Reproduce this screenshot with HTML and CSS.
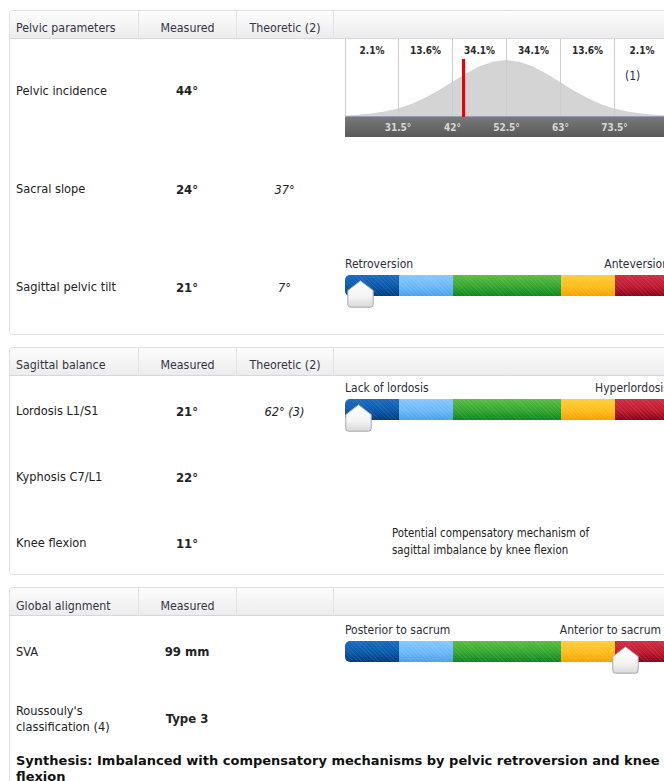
FILE: index.html
```html
<!DOCTYPE html>
<html lang="en">
<head>
<meta charset="utf-8">
<title>Sagittal analysis</title>
<link rel="stylesheet" href="styles.css">
</head>
<body>
<main class="report">

  <section class="card card-pelvic">
    <div class="head head-first">Pelvic parameters</div>
    <div class="head">Measured</div>
    <div class="head">Theoretic (2)</div>
    <div class="head"></div>

    <div class="label">Pelvic incidence</div>
    <div class="value">44°</div>
    <div class="theo"></div>
    <div class="viz viz-top">
      <svg class="distribution" width="330" height="98" viewBox="0 0 330 98">
        <defs>
          <linearGradient id="axisFill" x1="0" y1="0" x2="0" y2="1">
            <stop offset="0" stop-color="#7a7a7a"/>
            <stop offset="1" stop-color="#595959"/>
          </linearGradient>
        </defs>
        <path class="bell" d="M-1,77 L-1,76.4 L12.5,75.7 L26,74.5 L39.5,72.5 L53,69.4 L66.5,64.9 L80,58.8 L93.5,51.4 L107,43 L120.5,34.7 L134,27.6 L147.5,22.7 L161,21 L174.5,22.7 L188,27.6 L201.5,34.7 L215,43 L228.5,51.4 L242,58.8 L255.5,64.9 L269,69.4 L282.5,72.5 L296,74.5 L309.5,75.7 L323,76.4 L330,76.7 L330,77 Z"/>
        <g class="grid-lines">
          <line x1="0.5" y1="0" x2="0.5" y2="77"/>
          <line x1="53.5" y1="0" x2="53.5" y2="77"/>
          <line x1="107.5" y1="0" x2="107.5" y2="77"/>
          <line x1="161.5" y1="0" x2="161.5" y2="77"/>
          <line x1="215.5" y1="0" x2="215.5" y2="77"/>
          <line x1="269.5" y1="0" x2="269.5" y2="77"/>
        </g>
        <g class="pct">
          <text x="27" y="14.5">2.1%</text>
          <text x="80.5" y="14.5">13.6%</text>
          <text x="134.5" y="14.5">34.1%</text>
          <text x="188.5" y="14.5">34.1%</text>
          <text x="242.5" y="14.5">13.6%</text>
          <text x="297" y="14.5">2.1%</text>
        </g>
        <text class="ref" x="280" y="40.5">(1)</text>
        <rect x="0" y="77" width="330" height="21" fill="url(#axisFill)"/>
        <line class="axis-edge" x1="0" y1="77.5" x2="330" y2="77.5"/>
        <g class="ticks">
          <text x="53" y="91.5">31.5°</text>
          <text x="107.5" y="91.5">42°</text>
          <text x="161.5" y="91.5">52.5°</text>
          <text x="215.5" y="91.5">63°</text>
          <text x="269.5" y="91.5">73.5°</text>
        </g>
        <rect class="marker" x="117" y="20" width="3" height="58"/>
      </svg>
    </div>

    <div class="label">Sacral slope</div>
    <div class="value">24°</div>
    <div class="theo">37°</div>
    <div class="viz"></div>

    <div class="label">Sagittal pelvic tilt</div>
    <div class="value">21°</div>
    <div class="theo">7°</div>
    <div class="viz">
      <div class="slider">
        <div class="slider-labels"><span>Retroversion</span><span>Anteversion</span></div>
        <div class="bar">
          <span class="seg seg-navy"></span><span class="seg seg-sky"></span><span class="seg seg-green"></span><span class="seg seg-amber"></span><span class="seg seg-red"></span>
          <svg class="thumb" style="left: 2px" width="27" height="28" viewBox="0 0 27 28">
            <use href="#thumbShape"/>
          </svg>
        </div>
      </div>
    </div>
  </section>

  <section class="card card-balance">
    <div class="head head-first">Sagittal balance</div>
    <div class="head">Measured</div>
    <div class="head">Theoretic (2)</div>
    <div class="head"></div>

    <div class="label">Lordosis L1/S1</div>
    <div class="value">21°</div>
    <div class="theo">62° (3)</div>
    <div class="viz">
      <div class="slider">
        <div class="slider-labels"><span>Lack of lordosis</span><span>Hyperlordosis</span></div>
        <div class="bar">
          <span class="seg seg-navy"></span><span class="seg seg-sky"></span><span class="seg seg-green"></span><span class="seg seg-amber"></span><span class="seg seg-red"></span>
          <svg class="thumb" style="left: 0px" width="27" height="28" viewBox="0 0 27 28">
            <use href="#thumbShape"/>
          </svg>
        </div>
      </div>
    </div>

    <div class="label">Kyphosis C7/L1</div>
    <div class="value">22°</div>
    <div class="theo"></div>
    <div class="viz"></div>

    <div class="label">Knee flexion</div>
    <div class="value">11°</div>
    <div class="theo"></div>
    <div class="viz">
      <p class="note">Potential compensatory mechanism of<br>sagittal imbalance by knee flexion</p>
    </div>
  </section>

  <section class="card card-global">
    <div class="head head-first">Global alignment</div>
    <div class="head">Measured</div>
    <div class="head"></div>
    <div class="head"></div>

    <div class="label">SVA</div>
    <div class="value">99 mm</div>
    <div class="theo"></div>
    <div class="viz">
      <div class="slider">
        <div class="slider-labels"><span>Posterior to sacrum</span><span class="end-label">Anterior to sacrum</span></div>
        <div class="bar">
          <span class="seg seg-navy"></span><span class="seg seg-sky"></span><span class="seg seg-green"></span><span class="seg seg-amber"></span><span class="seg seg-red"></span>
          <svg class="thumb" style="left: 267px" width="27" height="28" viewBox="0 0 27 28">
            <use href="#thumbShape"/>
          </svg>
        </div>
      </div>
    </div>

    <div class="label">Roussouly's classification (4)</div>
    <div class="value">Type 3</div>
    <div class="theo"></div>
    <div class="viz"></div>

    <p class="synthesis">Synthesis: Imbalanced with compensatory mechanisms by pelvic retroversion and knee flexion</p>
  </section>

</main>

<svg class="defs" width="0" height="0" aria-hidden="true">
  <defs>
    <linearGradient id="thumbFill" x1="0" y1="0" x2="0" y2="1">
      <stop offset="0" stop-color="#ffffff"/>
      <stop offset="0.6" stop-color="#f4f4f4"/>
      <stop offset="1" stop-color="#d9d9d9"/>
    </linearGradient>
    <path id="thumbShape" d="M13.5,0.8 L26.2,10.5 L26.2,24.5 Q26.2,27.2 23.5,27.2 L3.5,27.2 Q0.8,27.2 0.8,24.5 L0.8,10.5 Z" fill="url(#thumbFill)" stroke="#a8a8a8" stroke-width="1"/>
  </defs>
</svg>
</body>
</html>
```

FILE: styles.css
```css
html, body {
  margin: 0;
  background: #ffffff;
}

body {
  padding: 10px 0 0 9px;
  overflow: hidden;
  font-family: "DejaVu Sans Condensed", "DejaVu Sans", sans-serif;
  font-stretch: condensed;
  font-size: 12px;
  color: #222222;
}

.report {
  display: flex;
  flex-direction: column;
  gap: 12px;
}

/* Each table is a four-column grid that runs past the right edge */
.card {
  width: 700px;
  border: 1px solid #dbe1e8;
  border-radius: 4px;
  display: grid;
  grid-template-columns: 128px 98px 97px 1fr;
}

.card-pelvic { grid-template-rows: 28px 99px 98px 98px; }
.card-balance { grid-template-rows: 28px 66px 66px 66px; }
.card-global { grid-template-rows: 28px 67px 67px auto; }

.head {
  box-sizing: border-box;
  display: flex;
  align-items: center;
  justify-content: center;
  border-bottom: 1px solid #d5d7da;
  background: linear-gradient(#fdfdfd 0%, #f6f6f7 40%, #ececee 100%);
  color: #34343f;
  padding-top: 6px;
  font-size: 12.3px;
}

.card-global .head {
  padding-top: 9px;
}

.head + .head {
  border-left: 1px solid #e2e3e5;
}

.head-first {
  justify-content: flex-start;
  padding-left: 6px;
  border-top-left-radius: 3px;
}

.label {
  display: flex;
  align-items: center;
  padding: 4px 8px 0 6px;
  font-size: 12.7px;
  line-height: 16px;
}

.value {
  align-self: center;
  padding-top: 4px;
  text-align: center;
  font-weight: bold;
  font-size: 13px;
}

.theo {
  align-self: center;
  padding-top: 4px;
  text-align: center;
  font-style: italic;
  font-size: 12.7px;
}

.viz {
  padding-left: 12px;
  display: flex;
  align-items: center;
}

.viz-top {
  align-items: flex-start;
}

/* Normal distribution chart */
.distribution {
  display: block;
  overflow: visible;
}

.bell {
  fill: #d4d4d4;
}

.grid-lines line {
  stroke: #cdcdcd;
  stroke-width: 1;
}

.pct text {
  font-family: "DejaVu Sans Condensed", "DejaVu Sans", sans-serif;
  font-stretch: condensed;
  font-size: 10px;
  font-weight: bold;
  fill: #2a2a2a;
  text-anchor: middle;
}

.ref {
  font-family: "DejaVu Sans Condensed", "DejaVu Sans", sans-serif;
  font-stretch: condensed;
  font-size: 12px;
  fill: #1e2a50;
}

.axis-edge {
  stroke: #8fa0b4;
  stroke-width: 1;
}

.ticks text {
  font-family: "DejaVu Sans Condensed", "DejaVu Sans", sans-serif;
  font-stretch: condensed;
  font-size: 10px;
  font-weight: bold;
  fill: #d6d6d6;
  text-anchor: middle;
}

.marker {
  fill: #ee0000;
}

/* Five-zone scale with a thumb */
.slider {
  width: 324px;
  margin-bottom: 6px;
}

.slider-labels {
  display: flex;
  justify-content: space-between;
  height: 14px;
  line-height: 14px;
  margin-bottom: 4px;
  color: #2e2e38;
  white-space: nowrap;
}

.card-global .slider {
  margin-top: 3px;
}

.end-label {
  margin-right: 8px;
}

.bar {
  position: relative;
  display: flex;
  height: 21px;
  border-radius: 5px;
  margin-bottom: 12px;
}

.seg {
  height: 100%;
  width: 54px;
  background-image:
    repeating-linear-gradient(45deg, rgba(255, 255, 255, 0.07) 0 1px, transparent 1px 3px),
    var(--tone);
}

.seg-navy {
  --tone: linear-gradient(#1a6cc2, #0a58a8 55%, #003a7c);
  border-radius: 5px 0 0 5px;
}

.seg-sky {
  --tone: linear-gradient(#86c8ff, #6cb8fa 55%, #4d9fe6);
}

.seg-green {
  width: 108px;
  --tone: linear-gradient(#5cbd42, #35a532 55%, #0d861e);
}

.seg-amber {
  --tone: linear-gradient(#ffcd38, #ffbd1c 55%, #f3a100);
}

.seg-red {
  --tone: linear-gradient(#d22c44, #bd1a30 55%, #88001a);
  border-radius: 0 5px 5px 0;
}

.thumb {
  position: absolute;
  top: 5px;
  display: block;
  overflow: visible;
}

.note {
  margin: 0 0 0 47px;
  padding-top: 2px;
  font-size: 11.4px;
  line-height: 17px;
  color: #222222;
}

.synthesis {
  grid-column: 1 / -1;
  margin: 0;
  padding: 3px 0 0 6px;
  max-width: 648px;
  font-family: "DejaVu Sans", sans-serif;
  font-stretch: normal;
  font-size: 13px;
  line-height: 16px;
  font-weight: bold;
  color: #111111;
}

.defs {
  position: absolute;
  width: 0;
  height: 0;
}
```
